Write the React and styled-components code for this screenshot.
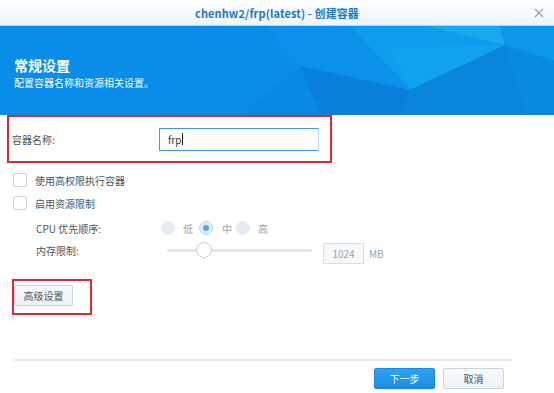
import React from "react";
import styled, { createGlobalStyle } from "styled-components";

const Global = createGlobalStyle`
  html, body { margin: 0; padding: 0; background: #fff; }
  body { font-family: "Noto Sans CJK SC", "Noto Sans", sans-serif; }
  * { box-sizing: border-box; }
`;

const Window = styled.div`
  width: 554px;
  height: 393px;
  display: flex;
  flex-direction: column;
  background: #fff;
  overflow: hidden;
`;

const TitleBar = styled.div`
  height: 26px;
  flex: none;
  display: flex;
  align-items: center;
  justify-content: center;
  position: relative;
  background: linear-gradient(#ffffff, #eef5fb);
  border-bottom: 1px solid #a9d4f4;
`;

const TitleText = styled.div`
  font-size: 11px;
  font-weight: 700;
  color: #1b79c4;
  letter-spacing: 0.1px;
`;

const Close = styled.div`
  position: absolute;
  right: 10px;
  top: 8px;
  width: 10px;
  height: 10px;
  display: flex;
`;

const Header = styled.div`
  position: relative;
  height: 89px;
  flex: none;
  background: #0a8ce9;
  overflow: hidden;
  display: flex;
  flex-direction: column;
  padding: 31px 0 0 14px;
`;

const HeaderArt = styled.svg`
  position: absolute;
  left: 0;
  top: 0;
`;

const HeaderTitle = styled.div`
  position: relative;
  color: #fff;
  font-size: 14px;
  font-weight: 700;
  line-height: 16px;
  height: 16px;
`;

const HeaderSub = styled.div`
  position: relative;
  color: #fff;
  font-size: 10px;
  line-height: 14px;
  height: 14px;
  margin-top: 3px;
`;

const Body = styled.div`
  flex: 1;
  display: flex;
  flex-direction: column;
  padding-left: 7px;
`;

const Marked = styled.div`
  border: 2px solid #e3262f;
  display: flex;
  width: ${(p) => p.$w}px;
  height: ${(p) => p.$h}px;
  margin-left: ${(p) => p.$ml || 0}px;
  margin-top: ${(p) => p.$mt || 0}px;
  padding-top: ${(p) => p.$pt || 0}px;
  align-items: ${(p) => (p.$top ? "flex-start" : "center")};
`;

const FieldLabel = styled.div`
  font-size: 10px;
  color: #4a545e;
  width: ${(p) => p.$w}px;
  flex: none;
  padding-left: ${(p) => p.$pl || 0}px;
`;

const TextBox = styled.div`
  width: 160px;
  height: 23px;
  border: 1px solid #3a98e6;
  border-right-color: #b8dbf6;
  display: flex;
  align-items: center;
  padding-left: 8px;
  font-size: 10px;
  color: #333;
`;

const Caret = styled.span`
  display: inline-block;
  width: 1px;
  height: 12px;
  background: #222;
  margin-left: 1px;
`;

const Options = styled.div`
  display: flex;
  flex-direction: column;
  margin-top: 10px;
  padding-left: 6px;
`;

const CheckRow = styled.div`
  display: flex;
  align-items: center;
  height: 14px;
  margin-bottom: 9px;
  font-size: 10px;
  color: #4a545e;
`;

const Box = styled.span`
  width: 14px;
  height: 14px;
  border: 1px solid #cbd4dc;
  border-radius: 2px;
  background: #fff;
  margin-right: 8px;
  flex: none;
`;

const SettingRow = styled.div`
  display: flex;
  align-items: center;
  height: ${(p) => p.$h}px;
  margin-top: ${(p) => p.$mt || 0}px;
`;

const Radio = styled.span`
  width: 14px;
  height: 14px;
  border-radius: 50%;
  background: #e5ebf1;
  border: 1px solid ${(p) => (p.$on ? "#a9d3f5" : "#e5ebf1")};
  display: flex;
  align-items: center;
  justify-content: center;
  flex: none;
  &::after {
    content: "";
    display: ${(p) => (p.$on ? "block" : "none")};
    width: 6px;
    height: 6px;
    border-radius: 50%;
    background: #4aa6ee;
  }
`;

const RadioLabel = styled.span`
  font-size: 10px;
  color: #9aa3ac;
  margin: 0 ${(p) => p.$mr}px 0 ${(p) => p.$ml}px;
`;

const Slider = styled.div`
  position: relative;
  width: 145px;
  height: 16px;
  margin-left: 6px;
  display: flex;
  align-items: center;
`;

const Track = styled.div`
  width: 100%;
  height: 3px;
  border-radius: 2px;
  background: #dfe5ea;
`;

const Thumb = styled.div`
  position: absolute;
  top: 0;
  width: 16px;
  height: 16px;
  border-radius: 50%;
  background: #fff;
  border: 1px solid #c2ccd5;
`;

const NumBox = styled.div`
  width: 41px;
  height: 21px;
  margin: 7px 0 0 11px;
  border: 1px solid #d8dee4;
  background: #f7f9fb;
  font-size: 10px;
  color: #9aa4ae;
  display: flex;
  align-items: center;
  justify-content: center;
`;

const Unit = styled.span`
  font-size: 10px;
  color: #9aa4ae;
  margin: 7px 0 0 5px;
`;

const Button = styled.button`
  height: 21px;
  width: ${(p) => p.$w}px;
  font-family: inherit;
  font-size: 10px;
  padding: 0;
  border-radius: 2px;
  cursor: pointer;
  border: 1px solid ${(p) => (p.$primary ? "#1b87dc" : "#c9d3dc")};
  color: ${(p) => (p.$primary ? "#fff" : "#4c5560")};
  background: ${(p) =>
    p.$primary
      ? "linear-gradient(#2ca2f5, #1b8de7)"
      : "linear-gradient(#f8fafc, #edf2f6)"};
`;

const Footer = styled.div`
  flex: none;
  display: flex;
  flex-direction: column;
`;

const Divider = styled.div`
  height: 2px;
  background: #e6e8ea;
  margin: 0 42px 0 14px;
`;

const ButtonRow = styled.div`
  display: flex;
  justify-content: flex-end;
  gap: 8px;
  padding: 7px 50px 4px 0;
`;

function Art() {
  return (
    <HeaderArt width="554" height="89" viewBox="0 0 554 89">
      <polygon points="265,0 350,0 410,64 300,40" fill="#0b91ea" />
      <polygon points="350,0 425,0 505,19 410,64" fill="#0e9cec" />
      <polygon points="390,22 505,19 410,64" fill="#13a6ef" opacity="0.6" />
      <polygon points="425,0 500,0 505,19" fill="#18a9f0" />
      <polygon points="500,0 554,0 554,35 505,19" fill="#0b98e8" />
      <polygon points="505,19 554,35 554,89 527,89" fill="#0a8ade" />
      <polygon points="410,64 505,19 527,89 400,89" fill="#0985dc" />
      <polygon points="300,40 410,64 400,89 320,89" fill="#0880db" />
      <polygon points="240,89 300,40 320,89" fill="#0a89e4" />
    </HeaderArt>
  );
}

export default function App() {
  return (
    <Window>
      <Global />
      <TitleBar>
        <TitleText>chenhw2/frp(latest) - 创建容器</TitleText>
        <Close>
          <svg width="10" height="10" viewBox="0 0 10 10">
            <path d="M1 1L9 9M9 1L1 9" stroke="#9aa4ad" strokeWidth="1.3" />
          </svg>
        </Close>
      </TitleBar>
      <Header>
        <Art />
        <HeaderTitle>常规设置</HeaderTitle>
        <HeaderSub>配置容器名称和资源相关设置。</HeaderSub>
      </Header>
      <Body>
        <Marked $w={325} $h={48}>
          <FieldLabel $w={150} $pl={3}>容器名称:</FieldLabel>
          <TextBox>
            frp<Caret />
          </TextBox>
        </Marked>
        <Options>
          <CheckRow>
            <Box />
            使用高权限执行容器
          </CheckRow>
          <CheckRow>
            <Box />
            启用资源限制
          </CheckRow>
          <SettingRow $h={14} $mt={2}>
            <FieldLabel $w={148} $pl={23}>CPU 优先顺序:</FieldLabel>
            <Radio />
            <RadioLabel $ml={8} $mr={6}>低</RadioLabel>
            <Radio $on />
            <RadioLabel $ml={9} $mr={4}>中</RadioLabel>
            <Radio />
            <RadioLabel $ml={8} $mr={0}>高</RadioLabel>
          </SettingRow>
          <SettingRow $h={22} $mt={4}>
            <FieldLabel $w={148} $pl={23}>内存限制:</FieldLabel>
            <Slider>
              <Track />
              <Thumb style={{ left: "29px" }} />
            </Slider>
            <NumBox>1024</NumBox>
            <Unit>MB</Unit>
          </SettingRow>
        </Options>
        <Marked $w={80} $h={36} $ml={5} $mt={18} $pt={4} $top>
          <Button $w={59}>高级设置</Button>
        </Marked>
      </Body>
      <Footer>
        <Divider />
        <ButtonRow>
          <Button $primary $w={61}>下一步</Button>
          <Button $w={61}>取消</Button>
        </ButtonRow>
      </Footer>
    </Window>
  );
}
